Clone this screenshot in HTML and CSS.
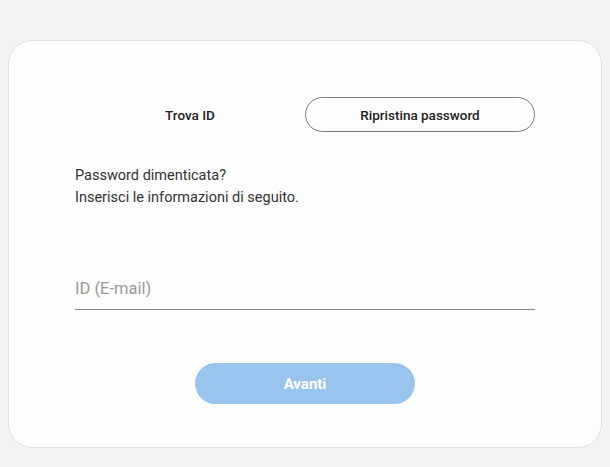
FILE: index.html
```html
<!DOCTYPE html>
<html lang="it">
<head>
<meta charset="utf-8">
<title>Ripristina password</title>
<link rel="stylesheet" href="styles.css">
</head>
<body>
<main class="card">
  <div class="tabs">
    <button class="tab">Trova ID</button>
    <button class="tab tab-active">Ripristina password</button>
  </div>
  <p class="intro">Password dimenticata?<br>Inserisci le informazioni di seguito.</p>
  <div class="field">
    <input class="input" type="text" placeholder="ID (E-mail)">
  </div>
  <div class="actions">
    <button class="next">Avanti</button>
  </div>
</main>
</body>
</html>
```
FILE: styles.css
```css
html, body {
  margin: 0;
  padding: 0;
}
body {
  background: #f4f4f4;
  font-family: Roboto, "Noto Sans", sans-serif;
  color: #222;
  padding: 40px 8px 19px;
  height: 467px;
  box-sizing: border-box;
}
.card {
  box-sizing: border-box;
  height: 408px;
  background: #fdfdfd;
  border: 1px solid #e2e2e2;
  border-radius: 24px;
  padding: 56px 66px 0;
}
.tabs {
  display: grid;
  grid-template-columns: 1fr 1fr;
}
.tab {
  height: 35px;
  border: 1px solid transparent;
  border-radius: 18px;
  background: transparent;
  font-family: inherit;
  font-size: 13.5px;
  font-weight: 500;
  color: #222;
  padding: 0;
}
.tab-active {
  border-color: #7a7a7a;
}
.intro {
  margin: 33px 0 0;
  font-size: 14.5px;
  line-height: 22px;
  color: #333;
}
.field {
  margin-top: 63px;
  border-bottom: 1px solid #888;
}
.input {
  display: block;
  width: 100%;
  box-sizing: border-box;
  border: 0;
  background: transparent;
  font-family: inherit;
  font-size: 16.5px;
  height: 37px;
  padding: 0 0 4px;
  color: #333;
  outline: none;
}
.input::placeholder {
  color: #9a9a9a;
}
.actions {
  display: flex;
  justify-content: center;
  margin-top: 53px;
}
.next {
  width: 220px;
  height: 41px;
  border: 0;
  border-radius: 21px;
  background: #98c4ee;
  color: #fff;
  font-family: inherit;
  font-size: 15px;
  font-weight: 700;
}
```
